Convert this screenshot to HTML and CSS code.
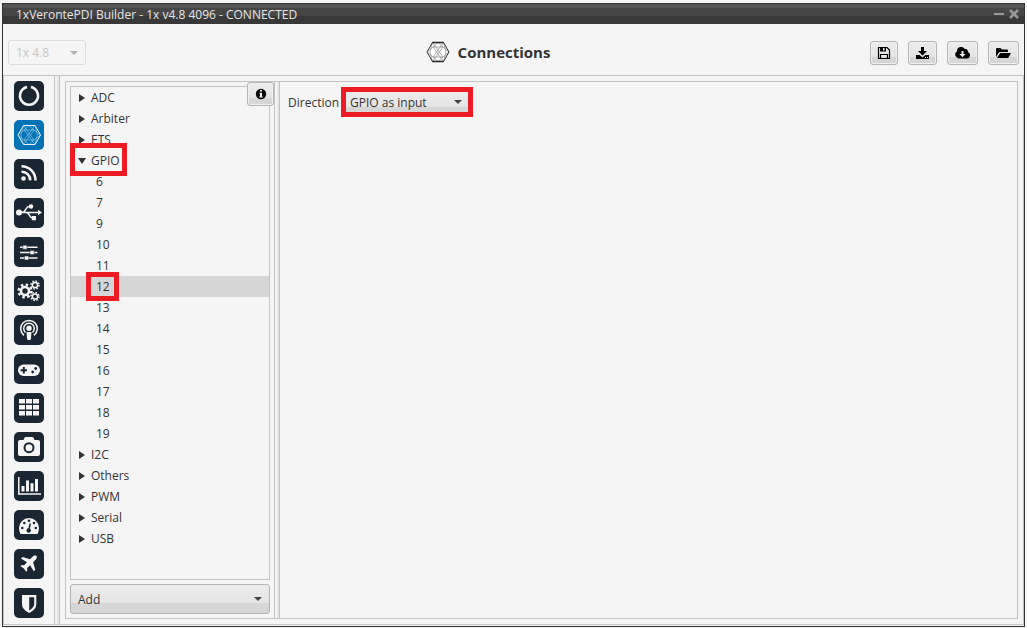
FILE: index.html
```html
<!DOCTYPE html>
<html lang="en">
<head>
    <meta charset="UTF-8">
    <meta name="viewport" content="width=device-width, initial-scale=1.0">
    <title>1xVerontePDI Builder</title>
    <link rel="stylesheet" href="styles.css">
</head>
<body>
    <div class="window">
        <div class="titlebar">
            <span class="titlebar-text">1xVerontePDI Builder - 1x v4.8 4096 - CONNECTED</span>
            <button class="win-btn" aria-label="Minimize">
                <svg width="10" height="10" viewBox="0 0 10 10"><path d="M0 5h10" stroke="#999" stroke-width="2"/></svg>
            </button>
            <button class="win-btn" aria-label="Close">
                <svg width="10" height="10" viewBox="0 0 10 10"><path d="M1 1l8 8M9 1l-8 8" stroke="#999" stroke-width="2.6"/></svg>
            </button>
        </div>

        <header class="header">
            <div class="combo combo-version">
                <select aria-label="Version" disabled>
                    <option>1x 4.8</option>
                </select>
            </div>
            <h1 class="page-title">
                <svg width="24" height="22" viewBox="0 0 24 22" fill="none">
                    <path d="M6.5 1.500h11L23 11l-5.500 9.500h-11L1 11z" fill="#fff"/>
                    <path d="M6.500 1.500L4 11l2.500 9.500M17.500 1.500L20 11l-2.500 9.500M1 11l6-5 5-4.500L17 6l6 5M1 11l6 5 5 4.500 5-4.500 6-5M6.500 1.500L17 16M17.500 1.500L7 16M7 6l10.500 14.500M17 6L6.500 20.500M7 6h10M7 16h10" stroke="#888" stroke-width=".7"/>
                    <path d="M6.500 1.500h11L23 11l-5.500 9.500h-11L1 11z" stroke="#333" stroke-width="1"/>
                    <path d="M6.500 1.500h11M6.500 20.500h11" stroke="#222" stroke-width="1.500"/>
                </svg>
                Connections
            </h1>
            <div class="toolbar">
                <button class="btn" aria-label="Save">
                    <svg width="14" height="14" viewBox="0 0 14 14"><path d="M1.500 1.500h8.500l2.500 2.500v8.500h-11zM3.500 12.500v-4h7v4" fill="none" stroke="#000" stroke-width="1.200"/><path d="M3 1h6v4.500H3z"/><path d="M6 2h1.500v2.500H6z" fill="#eee"/></svg>
                </button>
                <button class="btn" aria-label="Download to file">
                    <svg width="15" height="14" viewBox="0 0 15 14"><path d="M6 1h3v4h3L7.500 9.500 3 5h3zM1 9h3.500l3 2.500 3-2.500H14v4H1z"/><path d="M10 11h1v1h-1zM12 11h1v1h-1z" fill="#eee"/></svg>
                </button>
                <button class="btn" aria-label="Download from cloud">
                    <svg width="17" height="14" viewBox="0 0 17 14"><path d="M4.500 12.500A4 4 0 0 1 3 5.200 4.200 4.200 0 0 1 10.800 3 3 3 0 0 1 14 6a3.400 3.400 0 0 1-.8 6.500z"/><path d="M7.500 5h2v3h2.200l-3.200 3.200L5.300 8h2.200z" fill="#eee"/></svg>
                </button>
                <button class="btn" aria-label="Open">
                    <svg width="17" height="14" viewBox="0 0 17 14"><path d="M1 11V3q0-1 1-1h3.500l1.500 1.500h5q1 0 1 1V6H5q-1 0-1.500 1z"/><path d="M5.200 7H16l-2.500 4.500q-.3.500-1 .5H2z"/></svg>
                </button>
            </div>
        </header>

        <main class="main">
            <nav class="sidebar">
                <button class="side-btn" aria-label="General">
                    <svg viewBox="0 0 30 30"><path d="M17 6a9 9 0 1 1-4 0" class="line wide"/></svg>
                </button>
                <button class="side-btn active" aria-label="Connections">
                    <svg viewBox="0 0 30 30"><path d="M9.500 5.500h11.500L26.500 15 21 24.500H9.500L4 15z" class="line thin"/><path d="M9.500 5.500L7 15l2.500 9.500M21 5.500l2.500 9.500-2.500 9.500M4 15l6-5 5-4.500 5 4.500 6.500 5M4 15l6 5 5 4.500 5-4.500 6.500-5M9.500 5.500L20 20M21 5.500L10 20M10 10l11 14.500M20 10L9.500 24.500M10 10h10M10 20h10" class="line hair"/></svg>
                </button>
                <button class="side-btn" aria-label="Telemetry">
                    <svg viewBox="0 0 30 30"><circle cx="9.500" cy="19.500" r="2.300"/><path d="M7.500 12.700a8.500 8.500 0 0 1 8.700 8.700M7.500 7.300a14 14 0 0 1 14 14.100" class="line wide"/></svg>
                </button>
                <button class="side-btn" aria-label="Devices">
                    <svg viewBox="0 0 30 30"><circle cx="5" cy="14.500" r="3"/><path d="M5 14.500h20M8 14.500c4 0 3.500-6 7-6h2M12 14.500c4 0 3 5.500 6.500 5.500h1" class="line"/><circle cx="17" cy="8.500" r="2.200"/><path d="M17.800 18h4.200v4.200h-4.200zM24 11.800l4 2.700-4 2.700z"/></svg>
                </button>
                <button class="side-btn" aria-label="Control">
                    <svg viewBox="0 0 30 30"><path d="M6 10.200h17.500M6 15.600h17.500M6 21h17.500" class="line"/><path class="knob" d="M8.800 8.200H13v4H8.800zM16 13.600h4.200v4H16zM10.500 19h4.200v4h-4.200z"/></svg>
                </button>
                <button class="side-btn" aria-label="Settings">
                    <svg viewBox="0 0 30 30">
                        <circle cx="11" cy="15" r="6.300" class="line wide" stroke-dasharray="2.470 2.470"/>
                        <circle cx="11" cy="15" r="4" class="line wide"/>
                        <circle cx="21" cy="9" r="2.600" class="line"/>
                        <circle cx="21" cy="9" r="4" class="line" stroke-dasharray="1.570 1.570"/>
                        <circle cx="21" cy="20.500" r="2.600" class="line"/>
                        <circle cx="21" cy="20.500" r="4" class="line" stroke-dasharray="1.570 1.570"/>
                    </svg>
                </button>
                <button class="side-btn" aria-label="Communications">
                    <svg viewBox="0 0 30 30"><path d="M10 20.300a8.300 8.300 0 1 1 10 0M11.500 17.500a5.300 5.300 0 1 1 7 0" class="line"/><circle cx="15" cy="13.300" r="2.700"/><path d="M12.500 17h5l-.6 7q-.2 1-1 1h-1.800q-.8 0-1-1z"/></svg>
                </button>
                <button class="side-btn" aria-label="Stick">
                    <svg viewBox="0 0 30 30"><rect x="4" y="10.500" width="22" height="11.500" rx="5.700"/><path d="M9.800 13v6.500M6.500 16.300H13" class="cut"/><circle cx="21.700" cy="14.500" r="1.400" class="hole"/><circle cx="18.700" cy="18" r="1.400" class="hole"/></svg>
                </button>
                <button class="side-btn" aria-label="Variables">
                    <svg viewBox="0 0 30 30"><path d="M5 6h6v4.500H5zM12 6h6v4.500h-6zM19 6h6v4.500h-6zM5 12h6v4.500H5zM12 12h6v4.500h-6zM19 12h6v4.500h-6zM5 18h6v4.500H5zM12 18h6v4.500h-6zM19 18h6v4.500h-6z"/></svg>
                </button>
                <button class="side-btn" aria-label="Camera">
                    <svg viewBox="0 0 30 30"><path d="M6 8h3.500l1-2.200q.3-.8 1-.8h7q.7 0 1 .8l1 2.200H24q2 0 2 2v12q0 2-2 2H6q-2 0-2-2V10q0-2 2-2z"/><circle cx="15" cy="15.700" r="4.500" class="cut"/></svg>
                </button>
                <button class="side-btn" aria-label="Charts">
                    <svg viewBox="0 0 30 30"><path d="M4.800 6v17H27" class="line"/><path d="M7.500 15h3v5.500h-3zM12 9.500h3v11h-3zM16.500 12.300h3v8.200h-3zM21 8h3v12.500h-3z"/></svg>
                </button>
                <button class="side-btn" aria-label="Panel">
                    <svg viewBox="0 0 30 30"><path d="M6.500 24Q5 21.500 5 18a10 10 0 0 1 20 0q0 3.500-1.500 6z"/><g class="hole"><circle cx="8.300" cy="18" r="1.300"/><circle cx="10.300" cy="13" r="1.300"/><circle cx="15" cy="10.800" r="1.300"/><circle cx="20" cy="13" r="1.300"/><circle cx="21.800" cy="18" r="1.300"/><circle cx="14.700" cy="20.500" r="2.200"/></g><path d="M14.700 20.500l1.600-7" class="cut slim"/></svg>
                </button>
                <button class="side-btn" aria-label="Flight">
                    <svg viewBox="0 0 30 30"><path d="M22.500 7c-1-1-3-.3-4 .7L16 10.200 8.500 8 7 9.500l6 3.700-2.800 3L7.800 16l-1.300 1.200 3.400 2.200 2.200 3.400 1.200-1.300-.2-2.400 3-2.800 3.700 6 1.500-1.500-2.200-7.500 2.500-2.500c1-1 1.700-2.900.9-3.800z"/></svg>
                </button>
                <button class="side-btn" aria-label="Safety">
                    <svg viewBox="0 0 30 30"><path d="M8 7h14.300v9q0 5.500-7.100 9Q8 21.500 8 16z"/><path d="M15.200 9.200h5V16q0 3.500-5 6.400z" class="hole"/></svg>
                </button>
            </nav>
            <div class="splitter"></div>

            <div class="content">
                <div class="panel">
                    <div class="tree-column">
                        <button class="btn info-btn" aria-label="Information">
                            <svg width="12" height="12" viewBox="0 0 12 12"><circle cx="6" cy="6" r="5.200"/><path d="M5 2h2v1.600H5zM4.500 4.700H7v3.600h.6v1.200H4.400V8.300H5V5.900h-.5z" fill="#eee"/></svg>
                        </button>
                        <ul class="tree">
                            <li><button class="node">ADC</button></li>
                            <li><button class="node">Arbiter</button></li>
                            <li><button class="node">ETS</button></li>
                            <li>
                                <button class="node open marked">GPIO</button>
                                <ul>
                                    <li><button class="leaf">6</button></li>
                                    <li><button class="leaf">7</button></li>
                                    <li><button class="leaf">9</button></li>
                                    <li><button class="leaf">10</button></li>
                                    <li><button class="leaf">11</button></li>
                                    <li><button class="leaf selected marked">12</button></li>
                                    <li><button class="leaf">13</button></li>
                                    <li><button class="leaf">14</button></li>
                                    <li><button class="leaf">15</button></li>
                                    <li><button class="leaf">16</button></li>
                                    <li><button class="leaf">17</button></li>
                                    <li><button class="leaf">18</button></li>
                                    <li><button class="leaf">19</button></li>
                                </ul>
                            </li>
                            <li><button class="node">I2C</button></li>
                            <li><button class="node">Others</button></li>
                            <li><button class="node">PWM</button></li>
                            <li><button class="node">Serial</button></li>
                            <li><button class="node">USB</button></li>
                        </ul>
                        <div class="combo combo-add">
                            <select aria-label="Add">
                                <option>Add</option>
                            </select>
                        </div>
                    </div>
                    <div class="splitter"></div>
                    <div class="details">
                        <label for="direction">Direction</label>
                        <div class="combo combo-direction">
                            <select id="direction">
                                <option>GPIO as input</option>
                                <option>GPIO as output</option>
                            </select>
                        </div>
                    </div>
                </div>
            </div>
        </main>
    </div>
</body>
</html>
```
FILE: styles.css
```css
*, *::before, *::after {
    box-sizing: border-box;
}
body {
    margin: 0;
    padding: 3px 2px 1px;
    height: 100vh;
    background: #f5f5f5;
    color: #333;
    font-family: "Open Sans", "Noto Sans", sans-serif;
    font-size: 12px;
}
button, select {
    font: inherit;
    color: inherit;
    margin: 0;
    padding: 0;
    border: 0;
    background: none;
}
svg {
    display: block;
}
ul {
    list-style: none;
    margin: 0;
    padding: 0;
}
.window {
    display: flex;
    flex-direction: column;
    height: 100%;
    border: 1px solid #333;
    padding-bottom: 1px;
    background: #f5f5f5;
}

/* title bar */
.titlebar {
    display: flex;
    align-items: center;
    gap: 5px;
    height: 20px;
    padding: 0 5px 0 13px;
    background: linear-gradient(#555 4px, #464646 4px, #464646 12px, #383838 12px);
    color: #e6e6e6;
}
.titlebar-text {
    flex: 1;
}

/* header */
.header {
    display: flex;
    align-items: center;
    height: 51px;
    padding: 0 5px;
}
.page-title {
    flex: 1;
    display: flex;
    align-items: center;
    justify-content: center;
    gap: 8px;
    margin: 0;
    padding: 5px 0 0 20px;
    font-size: 15px;
    line-height: 20px;
}
.toolbar {
    display: flex;
    gap: 10px;
    padding-top: 6px;
}
.btn {
    display: flex;
    align-items: center;
    justify-content: center;
    height: 24px;
    padding: 0 6px;
    border: 1px solid #b5b5b5;
    border-radius: 3px;
    background: linear-gradient(#ececec, #e4e4e4 66%, #d6d6d6 66%);
    box-shadow: inset 0 0 0 1px #f0f0f0;
}

/* combo boxes */
.combo {
    position: relative;
    display: flex;
}
.combo select {
    appearance: none;
    flex: 1;
    padding: 0 7px;
    border: 1px solid #b5b5b5;
    border-radius: 3px;
    background: linear-gradient(#ececec, #e4e4e4 66%, #d6d6d6 66%);
}
.combo::after {
    content: "";
    position: absolute;
    right: 8px;
    top: 50%;
    margin-top: -2px;
    border: 4px solid transparent;
    border-top-color: #444;
    border-bottom: 0;
    pointer-events: none;
}
.combo-version {
    width: 78px;
    height: 25px;
    margin-top: 6px;
}
.combo-version select {
    border-color: #ddd;
    background: #f5f5f5;
    color: #c8c8c8;
    opacity: 1;
}
.combo-version::after {
    border-top-color: #b0b0b0;
}
.combo-add {
    height: 30px;
}
.combo-direction {
    width: 132px;
    height: 30px;
    border: 5px solid #ed1c24;
}
.combo-direction select {
    border: 0;
    border-radius: 0;
    padding: 0 4px;
    background: linear-gradient(#ececec, #e4e4e4 75%, #d6d6d6 75%);
}
.combo-direction::after {
    right: 6px;
}

/* body */
.main {
    display: flex;
    flex: 1;
    min-height: 0;
    border: 1px solid #c3c3c3;
}
.sidebar {
    display: flex;
    flex-direction: column;
    gap: 9px;
    width: 50px;
    padding: 5px 10px 0;
    overflow: hidden;
}
.side-btn {
    flex: none;
    height: 30px;
    border-radius: 5px;
    background: #1a2733;
}
.side-btn.active {
    background: #0073b7;
}
.side-btn svg {
    fill: #f5f5f5;
}
.side-btn .line {
    fill: none;
    stroke: #f5f5f5;
    stroke-width: 1.5;
}
.side-btn .wide {
    stroke-width: 2.6;
}
.side-btn .thin {
    stroke-width: 1;
}
.side-btn .hair {
    stroke: #b5dcf2;
    stroke-width: 0.5;
}
.side-btn .cut {
    fill: none;
    stroke: #1a2733;
    stroke-width: 2;
}
.side-btn .slim {
    stroke-width: 1.5;
}
.side-btn .hole {
    fill: #1a2733;
}
.side-btn .knob {
    stroke: #1a2733;
    stroke-width: 0.5;
}
.splitter {
    flex: none;
    width: 6px;
    border: solid #c3c3c3;
    border-width: 0 1px;
    background: linear-gradient(90deg, #f5f5f5 50%, #e6e6e6 50%);
}
.content {
    flex: 1;
    display: flex;
    padding: 5px;
}
.panel {
    flex: 1;
    display: flex;
    border: 1px solid #c3c3c3;
}

/* connections tree */
.tree-column {
    position: relative;
    display: flex;
    flex-direction: column;
    gap: 4px;
    width: 208px;
    padding: 4px;
}
.info-btn {
    position: absolute;
    top: 0;
    right: 0;
    width: 27px;
}
.tree {
    flex: 1;
    border: 1px solid #c3c3c3;
}
.node, .leaf {
    position: relative;
    display: flex;
    align-items: center;
    width: 100%;
    height: 21px;
}
.node {
    gap: 6px;
    padding-left: 8px;
}
.node::before {
    content: "";
    border: 4px solid transparent;
    border-left: 6px solid #333;
    border-right: 0;
}
.node.open {
    gap: 5px;
    padding-left: 7px;
}
.node.open::before {
    border: 4px solid transparent;
    border-top: 6px solid #333;
    border-bottom: 0;
}
.leaf {
    padding-left: 25px;
}
.leaf.selected {
    background: #d6d6d6;
}
/* red frames around the path to the current connection */
.marked::after {
    content: "";
    position: absolute;
    z-index: 1;
    border: 5px solid #ed1c24;
}
.node.marked::after {
    left: -1px;
    top: -7px;
    width: 57px;
    height: 33px;
}
.leaf.marked::after {
    left: 15px;
    top: -4px;
    width: 33px;
    height: 29px;
}

.details {
    flex: 1;
    display: flex;
    align-items: center;
    align-self: flex-start;
    gap: 2px;
    padding: 5px 8px;
}
```
